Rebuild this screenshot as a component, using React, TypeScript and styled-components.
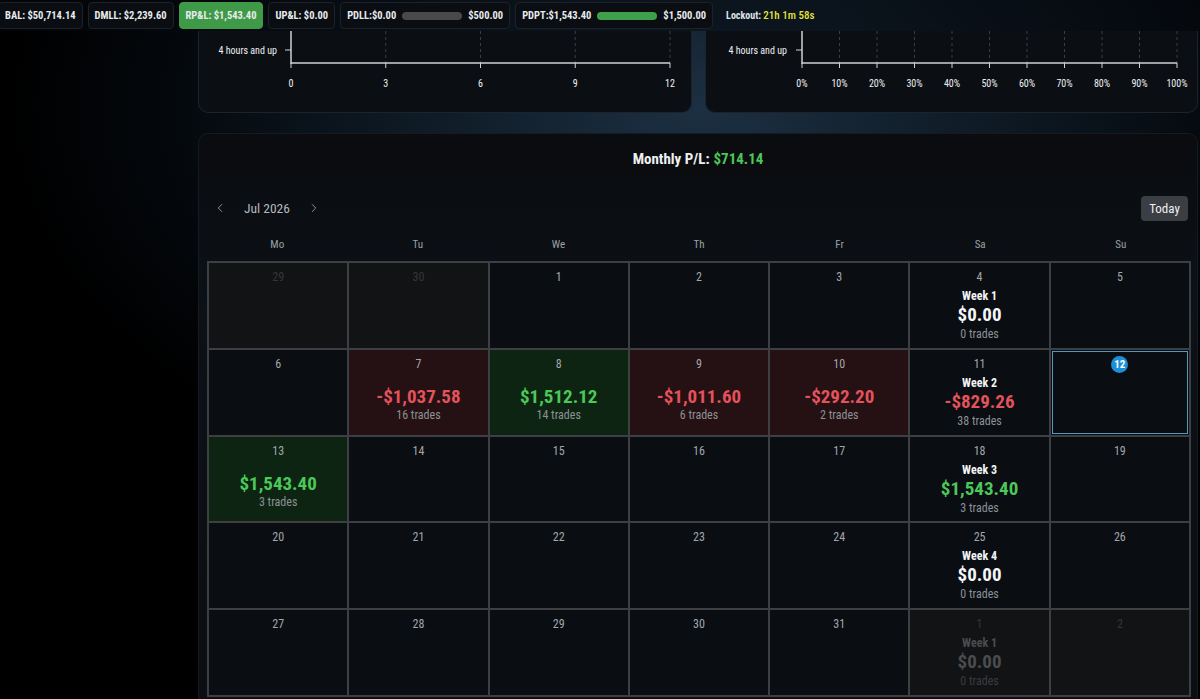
import styled, { createGlobalStyle, css } from "styled-components"
import { ChevronLeft, ChevronRight } from "lucide-react"

const FONT = `"Roboto Condensed", "Liberation Sans Narrow", "DejaVu Sans Condensed", Roboto, sans-serif`

const GlobalStyle = createGlobalStyle`
  html, body {
    margin: 0;
    padding: 0;
    height: 100%;
  }
  body {
    background: #000;
    font-family: ${FONT};
    color: #e6e8ea;
    overflow: hidden;
  }
`

const Page = styled.div`
  width: 1200px;
  height: 699px;
  overflow: hidden;
  background: radial-gradient(
    ellipse 700px 420px at 700px 110px,
    #1c3043 0%,
    #0d1822 45%,
    #03060a 80%,
    #000 100%
  );
  display: flex;
  flex-direction: column;
`

const TopBar = styled.div`
  height: 31px;
  flex-shrink: 0;
  display: flex;
  align-items: center;
  gap: 5px;
  margin-left: -2px;
  background: rgba(6, 10, 15, 0.55);
`

const Pill = styled.div<{ $green?: boolean }>`
  height: 27px;
  box-sizing: border-box;
  display: flex;
  align-items: center;
  gap: 6px;
  padding: 0 6px;
  border-radius: 4px;
  font-size: 10.5px;
  font-weight: 700;
  color: #e9ebed;
  white-space: nowrap;
  background: ${(p) => (p.$green ? "#3f9a48" : "#0a0d11")};
  border: 1px solid ${(p) => (p.$green ? "#3f9a48" : "#1d2228")};
`

const Bar = styled.div<{ $green?: boolean }>`
  width: 60px;
  height: 8px;
  border-radius: 4px;
  background: ${(p) => (p.$green ? "#3f9e4a" : "#48494b")};
`

const Lockout = styled.div`
  margin-left: 8px;
  font-size: 10px;
  font-weight: 700;
  color: #dfe3e6;
  span {
    color: #e4e63c;
    font-size: 11px;
    font-weight: 500;
  }
`

const Main = styled.div`
  padding: 0 2px 0 198px;
  display: flex;
  flex-direction: column;
  gap: 20px;
`

const ChartRow = styled.div`
  display: flex;
  gap: 13px;
`

const ChartPanel = styled.div<{ $w: number }>`
  width: ${(p) => p.$w}px;
  height: 82px;
  box-sizing: border-box;
  background: #0b0f14;
  border: 1px solid #1c232a;
  border-top: none;
  border-radius: 0 0 10px 10px;
`

const CalendarPanel = styled.div`
  background: linear-gradient(180deg, #0a0d11 0%, #0c1117 30%, #0b0e13 100%);
  border: 1px solid #161b21;
  border-radius: 10px 10px 0 0;
  height: 600px;
  padding: 0 8px 0 8px;
`

const MonthHeader = styled.div`
  height: 49px;
  display: flex;
  align-items: center;
  justify-content: center;
  font-size: 15px;
  font-weight: 700;
  color: #eef0f2;
  background: #0a0c10;
  margin: 0 -8px;
  border-radius: 10px 10px 0 0;
  span {
    color: #4cc75a;
    margin-left: 4px;
  }
`

const NavRow = styled.div`
  display: flex;
  align-items: center;
  justify-content: space-between;
  margin-top: 13px;
  height: 24px;
`

const NavLeft = styled.div`
  display: flex;
  align-items: center;
  gap: 17px;
  padding-left: 6px;
  color: #b4b8bc;
  font-size: 13.5px;
  svg {
    color: #a0a4a8;
  }
`

const TodayButton = styled.div`
  width: 47px;
  height: 25px;
  margin-right: 1px;
  border-radius: 4px;
  background: #3b3e43;
  color: #eef0f2;
  font-size: 13px;
  display: flex;
  align-items: center;
  justify-content: center;
`

const Weekdays = styled.div`
  display: grid;
  grid-template-columns: repeat(7, 1fr);
  margin: 12px 0 0;
  width: 984px;
  height: 25px;
  align-items: center;
  text-align: center;
  font-size: 11px;
  color: #9ca0a4;
`

const Grid = styled.div`
  margin-top: 4px;
  width: 984px;
  display: grid;
  grid-template-columns: repeat(7, 1fr);
  grid-auto-rows: 84.8px;
  gap: 2px;
  padding: 2px;
  box-sizing: border-box;
  background: #3d3f42;
`

type Tone = "plain" | "red" | "green" | "out"

const toneBg: Record<Tone, string> = {
  plain: "#0a0d12",
  red: "#251013",
  green: "#0c2411",
  out: "#121314",
}

const Cell = styled.div<{ $tone: Tone; $today?: boolean }>`
  background: ${(p) => toneBg[p.$tone]};
  display: flex;
  flex-direction: column;
  align-items: center;
  padding-top: 6px;
  box-sizing: border-box;
  ${(p) =>
    p.$today &&
    css`
      outline: 1.5px solid #5597bd;
      outline-offset: -2px;
    `}
`

const DayNum = styled.div<{ $dim?: boolean }>`
  font-size: 12px;
  line-height: 16px;
  color: ${(p) => (p.$dim ? "#34373a" : "#a3a7ab")};
`

const TodayNum = styled.div`
  width: 17px;
  height: 17px;
  border-radius: 50%;
  background: #1b8fd8;
  color: #fff;
  font-size: 11px;
  font-weight: 700;
  display: flex;
  align-items: center;
  justify-content: center;
`

const Amount = styled.div<{ $color: string; $week?: boolean }>`
  margin-top: ${(p) => (p.$week ? 0 : 14)}px;
  font-size: 19px;
  line-height: ${(p) => (p.$week ? 24 : 22)}px;
  font-weight: 700;
  color: ${(p) => p.$color};
`

const Trades = styled.div<{ $dim?: boolean }>`
  font-size: 12px;
  line-height: 14px;
  color: ${(p) => (p.$dim ? "#3a3d40" : "#8d9195")};
`

const WeekLabel = styled.div<{ $dim?: boolean }>`
  margin-top: 4px;
  font-size: 12px;
  line-height: 14px;
  font-weight: 700;
  color: ${(p) => (p.$dim ? "#4a4d50" : "#f2f4f6")};
`

type Day = {
  n: number
  out?: boolean
  today?: boolean
  pl?: number
  trades?: number
  week?: number
}

const weeks: Day[][] = [
  [
    { n: 29, out: true },
    { n: 30, out: true },
    { n: 1 },
    { n: 2 },
    { n: 3 },
    { n: 4, week: 1, pl: 0, trades: 0 },
    { n: 5 },
  ],
  [
    { n: 6 },
    { n: 7, pl: -1037.58, trades: 16 },
    { n: 8, pl: 1512.12, trades: 14 },
    { n: 9, pl: -1011.6, trades: 6 },
    { n: 10, pl: -292.2, trades: 2 },
    { n: 11, week: 2, pl: -829.26, trades: 38 },
    { n: 12, today: true },
  ],
  [
    { n: 13, pl: 1543.4, trades: 3 },
    { n: 14 },
    { n: 15 },
    { n: 16 },
    { n: 17 },
    { n: 18, week: 3, pl: 1543.4, trades: 3 },
    { n: 19 },
  ],
  [
    { n: 20 },
    { n: 21 },
    { n: 22 },
    { n: 23 },
    { n: 24 },
    { n: 25, week: 4, pl: 0, trades: 0 },
    { n: 26 },
  ],
  [
    { n: 27 },
    { n: 28 },
    { n: 29 },
    { n: 30 },
    { n: 31 },
    { n: 1, out: true, week: 1, pl: 0, trades: 0 },
    { n: 2, out: true },
  ],
]

const money = (v: number) =>
  (v < 0 ? "-$" : "$") +
  Math.abs(v).toLocaleString("en-US", {
    minimumFractionDigits: 2,
    maximumFractionDigits: 2,
  })

const plColor = (v: number, dim?: boolean) => {
  if (dim) return "#4a4d50"
  if (v > 0) return "#4cc85a"
  if (v < 0) return "#e2535b"
  return "#f4f6f8"
}

const DayCell = ({ d }: { d: Day }) => {
  const hasDayPl = d.pl !== undefined && d.week === undefined
  let tone: Tone = "plain"
  if (d.out) tone = "out"
  else if (hasDayPl && d.pl! > 0) tone = "green"
  else if (hasDayPl && d.pl! < 0) tone = "red"

  return (
    <Cell $tone={tone} $today={d.today}>
      {d.today ? <TodayNum>{d.n}</TodayNum> : <DayNum $dim={d.out}>{d.n}</DayNum>}
      {d.week !== undefined && <WeekLabel $dim={d.out}>Week {d.week}</WeekLabel>}
      {d.pl !== undefined && (
        <Amount $color={plColor(d.pl, d.out)} $week={d.week !== undefined}>
          {money(d.pl)}
        </Amount>
      )}
      {d.trades !== undefined && <Trades $dim={d.out}>{d.trades} trades</Trades>}
    </Cell>
  )
}

const TickChart = ({
  labelEnd,
  axisX,
  axisEnd,
  ticks,
}: {
  labelEnd: number
  axisX: number
  axisEnd: number
  ticks: string[]
}) => {
  const step = (axisEnd - axisX) / (ticks.length - 1)
  return (
    <svg width="100%" height="82" style={{ display: "block" }}>
      {ticks.map((_, i) =>
        i === 0 ? null : (
          <line
            key={i}
            x1={axisX + step * i}
            x2={axisX + step * i}
            y1={0}
            y2={32}
            stroke="#3a3f45"
            strokeDasharray="3 3"
          />
        )
      )}
      <line x1={axisX} x2={axisX} y1={0} y2={33} stroke="#d0d2d4" strokeWidth={1.5} />
      <line x1={axisX - 6} x2={axisX} y1={19} y2={19} stroke="#d0d2d4" />
      <line x1={axisX} x2={axisEnd} y1={32} y2={32} stroke="#d0d2d4" strokeWidth={1.5} />
      {ticks.map((t, i) => (
        <line
          key={"t" + i}
          x1={axisX + step * i}
          x2={axisX + step * i}
          y1={32}
          y2={37}
          stroke="#d0d2d4"
        />
      ))}
      <text
        x={labelEnd}
        y={23}
        textAnchor="end"
        fill="#eef0f2"
        fontSize="10"
        fontFamily={FONT}
      >
        4 hours and up
      </text>
      {ticks.map((t, i) => (
        <text
          key={"l" + i}
          x={axisX + step * i}
          y={56}
          textAnchor="middle"
          fill="#eef0f2"
          fontSize="10"
          fontFamily={FONT}
        >
          {t}
        </text>
      ))}
    </svg>
  )
}

export default function App() {
  return (
    <Page>
      <GlobalStyle />
      <TopBar>
        <Pill>BAL: $50,714.14</Pill>
        <Pill>DMLL: $2,239.60</Pill>
        <Pill $green>RP&amp;L: $1,543.40</Pill>
        <Pill>UP&amp;L: $0.00</Pill>
        <Pill>
          PDLL:$0.00
          <Bar />
          $500.00
        </Pill>
        <Pill>
          PDPT:$1,543.40
          <Bar $green />
          $1,500.00
        </Pill>
        <Lockout>
          Lockout: <span>21h 1m 58s</span>
        </Lockout>
      </TopBar>
      <Main>
        <ChartRow>
          <ChartPanel $w={494}>
            <TickChart labelEnd={78} axisX={92} axisEnd={471} ticks={["0", "3", "6", "9", "12"]} />
          </ChartPanel>
          <ChartPanel $w={494}>
            <TickChart
              labelEnd={81}
              axisX={96}
              axisEnd={471}
              ticks={["0%", "10%", "20%", "30%", "40%", "50%", "60%", "70%", "80%", "90%", "100%"]}
            />
          </ChartPanel>
        </ChartRow>
        <CalendarPanel>
          <MonthHeader>
            Monthly P/L: <span>$714.14</span>
          </MonthHeader>
          <NavRow>
            <NavLeft>
              <ChevronLeft size={14} strokeWidth={1.5} />
              <span>Jul 2026</span>
              <ChevronRight size={14} strokeWidth={1.5} />
            </NavLeft>
            <TodayButton>Today</TodayButton>
          </NavRow>
          <Weekdays>
            {["Mo", "Tu", "We", "Th", "Fr", "Sa", "Su"].map((d) => (
              <div key={d}>{d}</div>
            ))}
          </Weekdays>
          <Grid>
            {weeks.flat().map((d, i) => (
              <DayCell key={i} d={d} />
            ))}
          </Grid>
        </CalendarPanel>
      </Main>
    </Page>
  )
}
